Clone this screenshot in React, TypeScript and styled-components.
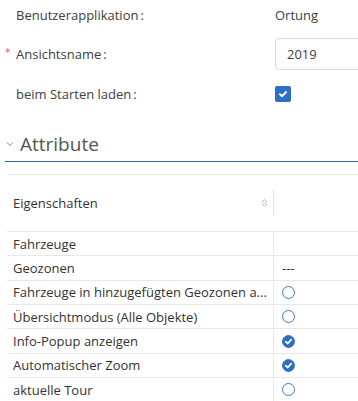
import React from "react";
import styled, { createGlobalStyle } from "styled-components";

const Global = createGlobalStyle`
  html, body { margin: 0; padding: 0; background: #fff; }
  body { font-family: "Open Sans", "Noto Sans", sans-serif; font-size: 13px; color: #404040; }
  * { box-sizing: border-box; }
`;

const Page = styled.div`
  width: 358px;
  height: 401px;
  overflow: hidden;
  background: #fff;
`;

const Form = styled.div`
  display: grid;
  grid-template-columns: 259px 1fr;
  grid-template-rows: 30px 32px 32px;
  row-gap: 8px;
  padding-left: 16px;
  align-items: center;
  position: relative;
`;

const Label = styled.div`
  position: relative;
  color: #404040;
  white-space: nowrap;
`;

const Colon = styled.span`
  margin-left: 2px;
`;

const Required = styled.span`
  position: absolute;
  left: -11px;
  top: 1px;
  color: #f0506e;
  font-family: "DejaVu Sans", sans-serif;
  font-size: 11px;
`;

const Value = styled.div`
  color: #404040;
  white-space: nowrap;
`;

const Input = styled.div`
  width: 220px;
  height: 32px;
  border: 1px solid #d9d9d9;
  border-radius: 4px;
  padding-left: 11px;
  display: flex;
  align-items: center;
  color: #404040;
  font-size: 13px;
`;

const CheckBox = styled.div`
  width: 16px;
  height: 16px;
  border-radius: 2px;
  background: #2d6ec6;
  display: flex;
  align-items: center;
  justify-content: center;
`;

const Section = styled.div`
  margin-top: 17px;
  margin-left: 5px;
`;

const Title = styled.div`
  height: 35px;
  display: flex;
  align-items: center;
  gap: 6px;
  border-bottom: 1px solid #3467b0;
  padding-left: 1px;
  padding-bottom: 1px;
`;

const TitleText = styled.span`
  font-size: 19px;
  color: #555;
`;

const Table = styled.div`
  margin-top: 12px;
  margin-left: 7px;
  border-top: 1px solid #e8e8e8;
`;

const Row = styled.div<{ $h: number }>`
  display: grid;
  grid-template-columns: 267px 1fr;
  height: ${(p) => p.$h}px;
  border-bottom: 1px solid #e8e8e8;
  align-items: center;
`;

const Cell = styled.div`
  padding-left: 6px;
  height: 100%;
  display: flex;
  align-items: center;
  border-right: 1px solid #e8e8e8;
  color: #333;
  white-space: nowrap;
  overflow: hidden;
`;

const HeadCell = styled.div`
  padding-left: 6px;
  padding-right: 5px;
  display: flex;
  align-items: center;
  justify-content: space-between;
  color: #333;
  height: 26px;
  border-right: 1px solid #e0e0e0;
`;

const ValueCell = styled.div`
  padding-left: 8px;
  display: flex;
  align-items: center;
  color: #333;
`;

const Radio = styled.div<{ $on?: boolean }>`
  width: 13px;
  height: 13px;
  border-radius: 50%;
  border: 1px solid #3d78cc;
  background: ${(p) => (p.$on ? "#2d6ec6" : "#fff")};
  display: flex;
  align-items: center;
  justify-content: center;
`;

const Check = ({ size = 10 }: { size?: number }) => (
  <svg width={size} height={size} viewBox="0 0 10 10">
    <path d="M2 5.2 L4.2 7.2 L8 3" fill="none" stroke="#fff" strokeWidth="2" strokeLinecap="round" strokeLinejoin="round" />
  </svg>
);

const Sorter = () => (
  <svg width="7" height="10" viewBox="0 0 7 10">
    <path d="M1 4 L3.5 1.5 L6 4" fill="none" stroke="#bdbdbd" strokeWidth="1" />
    <path d="M1 6 L3.5 8.5 L6 6" fill="none" stroke="#bdbdbd" strokeWidth="1" />
    <path d="M1 5 H6" stroke="#d0d0d0" strokeWidth="1" />
  </svg>
);

type Item = { label: string; kind: "none" | "dash" | "off" | "on" };
const items: Item[] = [
  { label: "Fahrzeuge", kind: "none" },
  { label: "Geozonen", kind: "dash" },
  { label: "Fahrzeuge in hinzugefügten Geozonen a...", kind: "off" },
  { label: "Übersichtmodus (Alle Objekte)", kind: "off" },
  { label: "Info-Popup anzeigen", kind: "on" },
  { label: "Automatischer Zoom", kind: "on" },
  { label: "aktuelle Tour", kind: "off" },
];

export default function App() {
  return (
    <Page>
      <Global />
      <Form>
        <Label>
          Benutzerapplikation<Colon>:</Colon>
        </Label>
        <Value>Ortung</Value>
        <Label>
          <Required>*</Required>
          Ansichtsname<Colon>:</Colon>
        </Label>
        <Input>2019</Input>
        <Label>
          beim Starten laden<Colon>:</Colon>
        </Label>
        <div>
          <CheckBox>
            <Check />
          </CheckBox>
        </div>
      </Form>
      <Section>
        <Title>
          <svg width="8" height="6" viewBox="0 0 8 6">
            <path d="M1 1.5 L4 4.5 L7 1.5" fill="none" stroke="#888" strokeWidth="1" />
          </svg>
          <TitleText>Attribute</TitleText>
        </Title>
      </Section>
      <Table>
        <Row $h={57}>
          <HeadCell>
            <span>Eigenschaften</span>
            <Sorter />
          </HeadCell>
          <div />
        </Row>
        {items.map((it) => (
          <Row key={it.label} $h={24.35}>
            <Cell>{it.label}</Cell>
            <ValueCell>
              {it.kind === "dash" && "---"}
              {it.kind === "off" && <Radio />}
              {it.kind === "on" && (
                <Radio $on>
                  <Check size={9} />
                </Radio>
              )}
            </ValueCell>
          </Row>
        ))}
      </Table>
    </Page>
  );
}
